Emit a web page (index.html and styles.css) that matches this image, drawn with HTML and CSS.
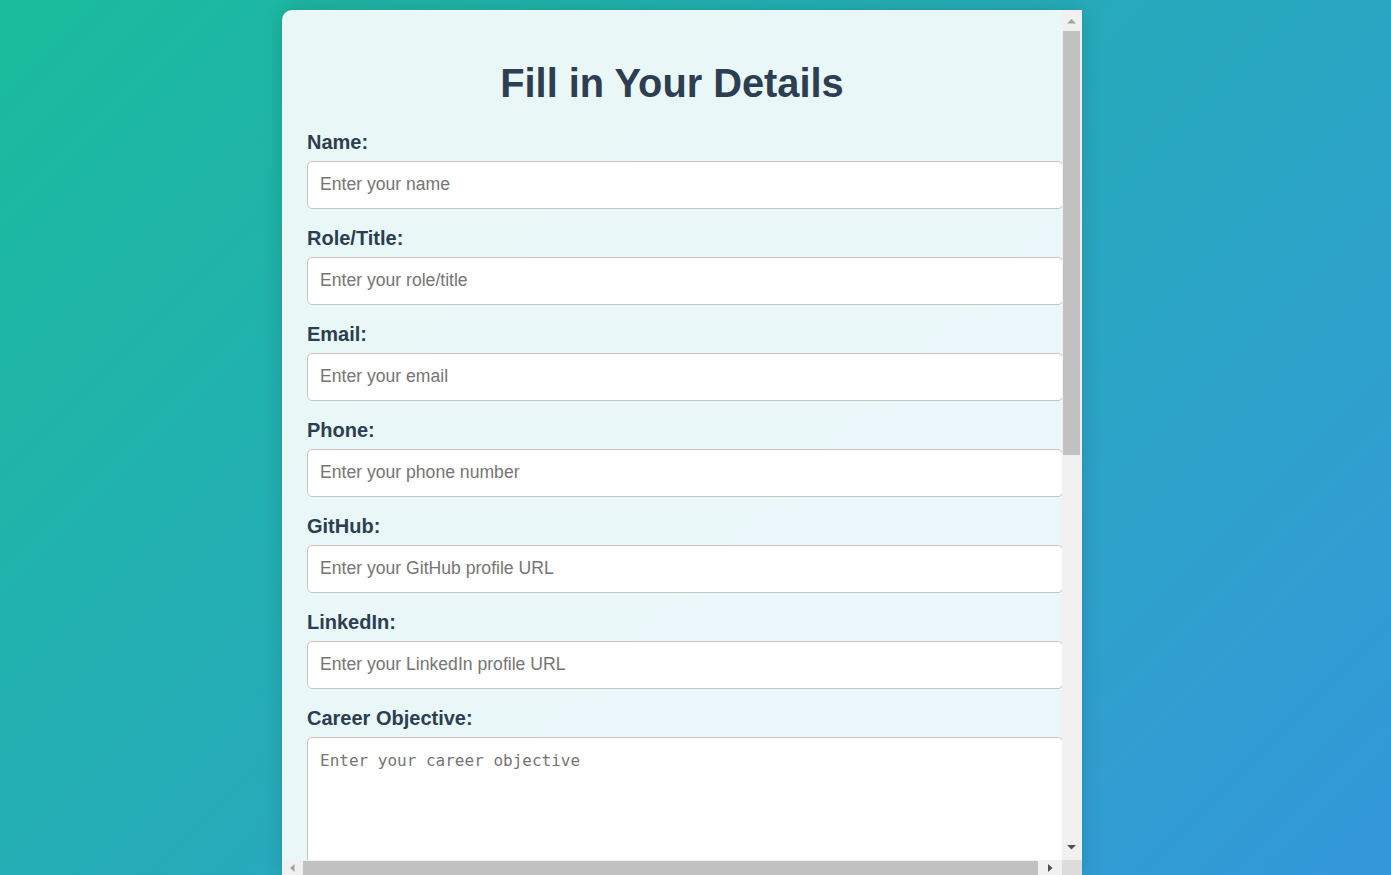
FILE: index.html
```html
<!DOCTYPE html>
<html lang="en">
<head>
<meta charset="UTF-8">
<title>Fill in Your Details</title>
<link rel="stylesheet" href="styles.css">
</head>
<body>
<div class="page">
  <div class="card">
    <div class="viewport">
      <h1 class="title">Fill in Your Details</h1>
      <form class="form">
        <label class="label" for="name">Name:</label>
        <input class="field" id="name" type="text" placeholder="Enter your name">
        <label class="label" for="role">Role/Title:</label>
        <input class="field" id="role" type="text" placeholder="Enter your role/title">
        <label class="label" for="email">Email:</label>
        <input class="field" id="email" type="email" placeholder="Enter your email">
        <label class="label" for="phone">Phone:</label>
        <input class="field" id="phone" type="text" placeholder="Enter your phone number">
        <label class="label" for="github">GitHub:</label>
        <input class="field" id="github" type="text" placeholder="Enter your GitHub profile URL">
        <label class="label" for="linkedin">LinkedIn:</label>
        <input class="field" id="linkedin" type="text" placeholder="Enter your LinkedIn profile URL">
        <label class="label" for="objective">Career Objective:</label>
        <textarea class="field area" id="objective" placeholder="Enter your career objective"></textarea>
      </form>
    </div>

    <div class="vbar">
      <div class="sb-btn vbtn">
        <svg class="arrow" width="20" height="20" viewBox="0 0 20 20"><polygon points="5,13.5 9.5,9 14,13.5" fill="#a3a3a3"/></svg>
      </div>
      <div class="vthumb"></div>
      <div class="sb-fill"></div>
      <div class="sb-btn vbtn">
        <svg class="arrow" width="20" height="20" viewBox="0 0 20 20"><polygon points="5,5 14,5 9.5,9.5" fill="#505050"/></svg>
      </div>
    </div>

    <div class="hbar">
      <div class="sb-btn hbtn">
        <svg class="arrow" width="20" height="15" viewBox="0 0 20 15"><polygon points="12.5,4 8,8 12.5,12" fill="#a3a3a3"/></svg>
      </div>
      <div class="hthumb"></div>
      <div class="sb-fill"></div>
      <div class="sb-btn hbtn">
        <svg class="arrow" width="20" height="15" viewBox="0 0 20 15"><polygon points="6,4 10.5,8 6,12" fill="#505050"/></svg>
      </div>
    </div>

    <div class="corner"></div>
  </div>
</div>
</body>
</html>
```
FILE: styles.css
```css
html, body {
  margin: 0;
  padding: 0;
  height: 100%;
  overflow: hidden;
}

body {
  background: linear-gradient(135deg, #1abc9c, #3498db);
  font-family: "Liberation Sans", Arial, sans-serif;
  color: #2c3e50;
}

.page {
  display: flex;
  justify-content: center;
  padding: 10px 27px 0 0;
}

.card {
  flex: none;
  display: grid;
  grid-template-columns: 780px 20px;
  grid-template-rows: 850px 15px;
  width: 800px;
  background: rgba(255, 255, 255, 0.9);
  border-radius: 10px 0 0 0;
  box-shadow: 0 0 20px rgba(0, 0, 0, 0.15);
  overflow: hidden;
}

.viewport {
  min-width: 0;
  overflow: hidden;
  padding: 25px 25px 0;
}

/* scrollbars */
.vbar {
  display: flex;
  flex-direction: column;
  background: #f1f1f1;
}

.hbar {
  display: flex;
  background: #f1f1f1;
}

.corner {
  background: #dcdcdc;
}

.sb-btn {
  flex: none;
  display: flex;
}

.vbtn {
  height: 20px;
}

.hbtn {
  width: 20px;
}

.arrow {
  display: block;
}

.sb-fill {
  flex: 1;
}

.vthumb {
  flex: none;
  height: 424px;
  margin: 1px 2px 0 1px;
  background: #c1c1c1;
}

.hthumb {
  flex: none;
  width: 735px;
  margin: 1px 0 0 1px;
  background: #c1c1c1;
}

/* content */
.title {
  margin: 26px 0 25px;
  text-align: center;
  font-size: 39.8px;
  font-weight: bold;
  color: #2c3e50;
  line-height: normal;
}

.form {
  display: block;
}

.label {
  display: block;
  font-size: 20px;
  font-weight: bold;
  color: #2c3e50;
  margin: 0 0 8px;
  line-height: 22px;
}

.field {
  display: block;
  width: 100%;
  padding: 12px 12px 14px;
  margin: 0 0 18px;
  border: 1px solid #c4c4c4;
  border-radius: 5px;
  background: #fff;
  font-family: "Liberation Sans", Arial, sans-serif;
  font-size: 17.6px;
  line-height: 20px;
  color: #333;
}

.field::placeholder {
  color: #757575;
}

.area {
  height: 150px;
  padding: 13px 12px;
  font-family: "DejaVu Sans Mono", monospace;
  font-size: 16px;
  line-height: normal;
  resize: none;
}
```
